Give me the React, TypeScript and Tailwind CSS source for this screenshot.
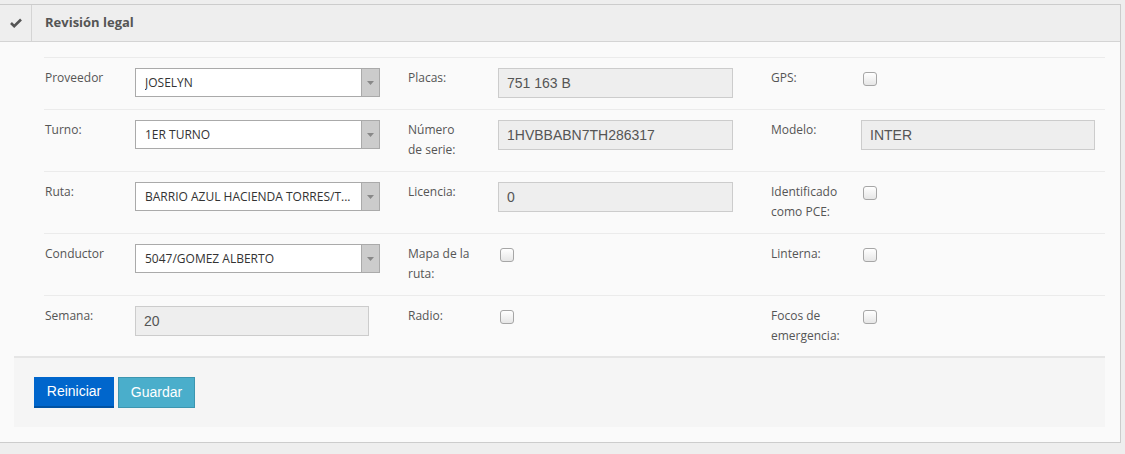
import React from "react";

const Select = ({ value, w }: { value: string; w: string }) => (
  <div className={`${w} h-[29px] bg-white border border-[#aaaaaa] flex items-stretch`}>
    <div className="flex-1 min-w-0 px-[9px] flex items-center text-[12px] text-[#333]">
      <span className="whitespace-nowrap overflow-hidden">{value}</span>
    </div>
    <div className="w-[18px] bg-[#cccccc] border-l border-[#aaaaaa] flex items-center justify-center">
      <svg width="7" height="4" viewBox="0 0 7 4">
        <path d="M0 0h7L3.5 4z" fill="#888" />
      </svg>
    </div>
  </div>
);

const TextInput = ({ value, w }: { value: string; w: string }) => (
  <div
    className={`${w} h-[30px] bg-[#eeeeee] border border-[#cccccc] px-[8px] flex items-center text-[14px] text-[#555] font-['Liberation_Sans',Arial,sans-serif]`}
  >
    {value}
  </div>
);

const Check = () => (
  <div className="mt-[4px] ml-[2px] w-[14px] h-[14px] rounded-[3px] border border-[#a6a6a6] bg-gradient-to-b from-[#ffffff] to-[#e6e6e6]" />
);

type Cell = { label: React.ReactNode; field: React.ReactNode };

const Row = ({ cells }: { cells: Cell[] }) => (
  <div className="flex border-t border-[#ebebeb] pt-[10px] pb-[11px]">
    {cells.map((c, i) => (
      <div key={i} className={`${i === 2 ? "flex-1" : "w-[363px]"} flex items-start pl-[1px]`}>
        <div className="w-[90px] text-[12px] leading-[20px] text-[#555]">{c.label}</div>
        {c.field}
      </div>
    ))}
  </div>
);

export default function App() {
  return (
    <div className="w-[1125px] h-[454px] bg-[#eeeeee] pt-[4px] font-['Open_Sans',sans-serif]">
      <div className="w-[1121px] bg-[#fafafa] border-t border-r border-b border-[#cccccc]">
        <div className="h-[37px] flex bg-[#eeeeee] border-b border-[#d4d4d4]">
          <div className="w-[32px] border-r border-[#d4d4d4] flex items-center justify-center">
            <svg width="12" height="10" viewBox="0 0 12 10">
              <path d="M1 5l3.2 3.2L11 1.5" stroke="#555" strokeWidth="2.6" fill="none" />
            </svg>
          </div>
          <div className="pl-[13px] flex items-center text-[13px] font-bold text-[#555]">Revisión legal</div>
        </div>
        <div className="pt-[15px] px-[14px] pb-[15px]">
          <div className="ml-[30px] mr-[1px]">
            <Row
              cells={[
                { label: "Proveedor", field: <Select value="JOSELYN" w="w-[245px]" /> },
                { label: "Placas:", field: <TextInput value="751 163 B" w="w-[235px]" /> },
                { label: "GPS:", field: <Check /> },
              ]}
            />
            <Row
              cells={[
                { label: "Turno:", field: <Select value="1ER TURNO" w="w-[245px]" /> },
                { label: <>Número<br />de serie:</>, field: <TextInput value="1HVBBABN7TH286317" w="w-[235px]" /> },
                { label: "Modelo:", field: <TextInput value="INTER" w="w-[234px]" /> },
              ]}
            />
            <Row
              cells={[
                { label: "Ruta:", field: <Select value="BARRIO AZUL HACIENDA TORRES/T..." w="w-[245px]" /> },
                { label: "Licencia:", field: <TextInput value="0" w="w-[235px]" /> },
                { label: <>Identificado<br />como PCE:</>, field: <Check /> },
              ]}
            />
            <Row
              cells={[
                { label: "Conductor", field: <Select value="5047/GOMEZ ALBERTO" w="w-[245px]" /> },
                { label: <>Mapa de la<br />ruta:</>, field: <Check /> },
                { label: "Linterna:", field: <Check /> },
              ]}
            />
            <Row
              cells={[
                { label: "Semana:", field: <TextInput value="20" w="w-[234px]" /> },
                { label: "Radio:", field: <Check /> },
                { label: <>Focos de<br />emergencia:</>, field: <Check /> },
              ]}
            />
          </div>
          <div className="mr-[1px] -mt-[1px] bg-[#f5f5f5] border-t-2 border-[#e5e5e5] pt-[19px] pb-[19px] pl-[20px] flex gap-[4px] font-['Liberation_Sans',Arial,sans-serif]">
            <button className="w-[80px] h-[31px] bg-[#0066cc] border-b-2 border-[#0052a3] text-white text-[14px]">
              Reiniciar
            </button>
            <button className="w-[77px] h-[31px] bg-[#4aaecb] border border-[#3c96b0] text-white text-[14px]">
              Guardar
            </button>
          </div>
        </div>
      </div>
    </div>
  );
}
